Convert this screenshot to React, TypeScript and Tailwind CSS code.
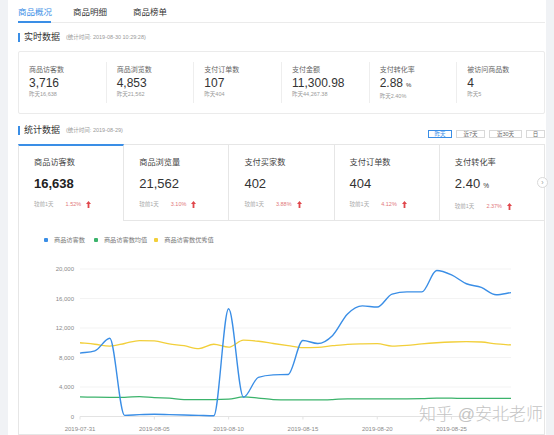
import React from "react";

const FONT = "font-['Liberation_Sans','Noto_Sans_CJK_SC',sans-serif]";

const blue = [8600, 8900, 10600, 150, 250, 300, 250, 200, 150, 100, 14600, 2600, 5300, 5650, 5700, 10300, 9900, 11000, 13900, 15000, 14850, 16600, 16900, 16900, 19800, 19200, 18000, 17500, 16500, 16800];
const green = [2650, 2620, 2600, 2600, 2700, 2550, 2500, 2300, 2300, 2300, 2350, 2650, 2500, 2300, 2250, 2250, 2250, 2300, 2400, 2400, 2400, 2400, 2400, 2420, 2500, 2480, 2450, 2450, 2450, 2450];
const yellow = [10000, 9800, 9550, 9900, 10300, 10250, 9850, 9600, 9200, 9800, 9400, 10350, 10200, 9900, 9600, 9330, 9380, 9600, 9790, 9850, 9870, 9550, 9650, 9850, 10000, 10100, 10140, 10100, 9850, 9700];

const X = (d: number) => 80 + d * (431 / 29);
const Y = (v: number) => 414.5 - (v * 147.5) / 20000;

function monotone(vals: number[]) {
  const xs = vals.map((_, i) => X(i));
  const ys = vals.map(Y);
  const n = xs.length;
  const s: number[] = [];
  for (let i = 0; i < n - 1; i++) s[i] = (ys[i + 1] - ys[i]) / (xs[i + 1] - xs[i]);
  const t: number[] = new Array(n).fill(0);
  for (let i = 1; i < n - 1; i++) {
    if (s[i - 1] * s[i] <= 0) t[i] = 0;
    else {
      const h0 = xs[i] - xs[i - 1];
      const h1 = xs[i + 1] - xs[i];
      const p = (s[i - 1] * h1 + s[i] * h0) / (h0 + h1);
      t[i] = (Math.sign(s[i - 1]) + Math.sign(s[i])) * Math.min(Math.abs(s[i - 1]), Math.abs(s[i]), 0.5 * Math.abs(p));
    }
  }
  t[0] = s[0];
  t[n - 1] = s[n - 2];
  let d = `M${xs[0].toFixed(2)},${ys[0].toFixed(2)}`;
  for (let i = 0; i < n - 1; i++) {
    const h = xs[i + 1] - xs[i];
    d += ` C${(xs[i] + h / 3).toFixed(2)},${(ys[i] + (t[i] * h) / 3).toFixed(2)} ${(xs[i + 1] - h / 3).toFixed(2)},${(ys[i + 1] - (t[i + 1] * h) / 3).toFixed(2)} ${xs[i + 1].toFixed(2)},${ys[i + 1].toFixed(2)}`;
  }
  return d;
}

const realtime = [
  { label: "商品访客数", value: "3,716", sub: "昨天16,638" },
  { label: "商品浏览数", value: "4,853", sub: "昨天21,562" },
  { label: "支付订单数", value: "107", sub: "昨天404" },
  { label: "支付金额", value: "11,300.98", sub: "昨天44,267.38" },
  { label: "支付转化率", value: "2.88", sub: "昨天2.40%", unit: "%" },
  { label: "被访问商品数", value: "4", sub: "昨天5" },
];

const metrics = [
  { label: "商品访客数", value: "16,638", pct: "1.52%" },
  { label: "商品浏览量", value: "21,562", pct: "3.10%" },
  { label: "支付买家数", value: "402", pct: "3.88%" },
  { label: "支付订单数", value: "404", pct: "4.12%" },
  { label: "支付转化率", value: "2.40", pct: "2.37%", unit: "%" },
];

function UpArrow() {
  return (
    <svg width="5" height="7" viewBox="0 0 5 7" className="ml-[5px]">
      <path d="M2.5 0 L5 3 L3.4 3 L3.4 7 L1.6 7 L1.6 3 L0 3 Z" fill="#e0474c" />
    </svg>
  );
}

function SectionTitle({ title, note }: { title: string; note: string }) {
  return (
    <div className="flex items-center h-[10px]">
      <div className="w-[2px] h-[9px] bg-[#3a8ee6]" />
      <span className="ml-[4px] text-[9px] leading-[10px] text-[#333]">{title}</span>
      <span className="ml-[6px] text-[5.5px] leading-[10px] text-[#999]">{note}</span>
    </div>
  );
}

export default function App() {
  const yTicks = [0, 4000, 8000, 12000, 16000, 20000];
  const xLabels = ["2019-07-31", "2019-08-05", "2019-08-10", "2019-08-15", "2019-08-20", "2019-08-25"];
  return (
    <div className={`w-[554px] h-[435px] overflow-hidden bg-[#f0f2f5] flex pl-[8px] ${FONT}`}>
      <div className="w-[538px] h-full bg-white pl-[10px] pr-[1px]">
        {/* top tabs */}
        <div className="flex h-[23px] border-b border-[#ebebeb] text-[8.5px] leading-[10px]">
          <div className="relative pt-[7px] text-[#3a8ee6]">
            商品概况
            <div className="absolute left-0 right-[1px] bottom-[-1px] h-[2px] bg-[#3a8ee6]" />
          </div>
          <div className="ml-[21px] pt-[7px] text-[#333]">商品明细</div>
          <div className="ml-[26px] pt-[7px] text-[#333]">商品榜单</div>
        </div>

        {/* realtime */}
        <div className="mt-[9px]">
          <SectionTitle title="实时数据" note="(统计时间: 2019-08-30 10:29:28)" />
        </div>
        <div className="mt-[9px] border border-[#ebebeb] rounded-[2px] py-[10px] flex">
          {realtime.map((r, i) => (
            <div key={i} className={`flex-1 pl-[10px] pt-[4px] pb-[3px] ${i > 0 ? "border-l border-[#eeeeee]" : ""}`}>
              <div className="text-[7px] leading-[8px] text-[#666]">{r.label}</div>
              <div className="mt-[3px] text-[12px] leading-[12px] text-[#333]">
                {r.value}
                {r.unit && <span className="ml-[3px] text-[6px]">{r.unit}</span>}
              </div>
              <div className="mt-[2px] text-[5.5px] leading-[7px] text-[#999]">{r.sub}</div>
            </div>
          ))}
        </div>

        {/* stat header */}
        <div className="mt-[11px] h-[13px] flex justify-between">
          <SectionTitle title="统计数据" note="(统计时间: 2019-08-29)" />
          <div className="flex gap-[4px] mt-[5px] text-[5.5px] leading-[5px]">
            <div className="w-[24px] h-[8px] border border-[#3a8ee6] text-[#3a8ee6] flex items-center justify-center">昨天</div>
            <div className="w-[29px] h-[8px] border border-[#d9d9d9] text-[#666] flex items-center justify-center">近7天</div>
            <div className="w-[33px] h-[8px] border border-[#d9d9d9] text-[#666] flex items-center justify-center">近30天</div>
            <div className="w-[19px] h-[8px] border border-[#d9d9d9] text-[#666] flex items-center justify-center">日</div>
          </div>
        </div>

        {/* metric tabs */}
        <div className="relative mt-[6px] flex h-[77px]">
          {metrics.map((m, i) => (
            <div
              key={i}
              className={`flex-1 pl-[15px] ${
                i === 0
                  ? "border-t-2 border-t-[#3a8ee6] border-l border-r border-[#e6e6e6] pt-[12px]"
                  : "border-t border-b border-r border-[#e6e6e6] pt-[13px]"
              }`}
            >
              <div className="text-[8.2px] leading-[10px] text-[#444]">{m.label}</div>
              <div className={`mt-[8px] text-[13px] leading-[16px] ${i === 0 ? "font-bold text-[#222]" : "text-[#333]"}`}>
                {m.value}
                {m.unit && <span className="ml-[3px] text-[6.5px] font-normal">{m.unit}</span>}
              </div>
              <div className="mt-[8px] flex items-center text-[5.5px] leading-[8px]">
                <span className="text-[#aaa]">较前1天</span>
                <span className="ml-[12px] text-[#e2787b]">{m.pct}</span>
                <UpArrow />
              </div>
            </div>
          ))}
          <div className="absolute right-[-3px] top-[33px] w-[11px] h-[11px] rounded-full border border-[#d9d9d9] bg-white flex items-center justify-center text-[7px] leading-[7px] text-[#999]">
            ›
          </div>
        </div>

        {/* chart */}
        <div className="relative h-[214px] border-l border-r border-b border-[#e6e6e6] pt-[15px]">
          <div className="flex items-center pl-[25px] h-[8px] text-[6.2px] leading-[8px] text-[#777]">
            <div className="w-[4px] h-[4px] rounded-[1px] bg-[#3a8ee6]" />
            <span className="ml-[6px]">商品访客数</span>
            <div className="ml-[9px] w-[4px] h-[4px] rounded-[1px] bg-[#3bb36b]" />
            <span className="ml-[6px]">商品访客数均值</span>
            <div className="ml-[7px] w-[4px] h-[4px] rounded-[1px] bg-[#f2cf3a]" />
            <span className="ml-[6px]">商品访客数优秀值</span>
          </div>
          <svg width="526" height="182" viewBox="19 250 526 182" className="mt-[8px] block">
            {yTicks.map((v) => (
              <g key={v}>
                <line x1="80" x2="511" y1={Y(v)} y2={Y(v)} stroke={v === 0 ? "#e3e3e3" : "#f3f3f3"} strokeWidth="1" />
                <text x="74" y={Y(v) + 2} textAnchor="end" fontSize="6" fill="#8a8a8a">
                  {v === 0 ? "0" : v.toLocaleString("en-US")}
                </text>
              </g>
            ))}
            {xLabels.map((l, i) => (
              <g key={l}>
                <line x1={X(i * 5)} x2={X(i * 5)} y1="414.5" y2="417.5" stroke="#e3e3e3" strokeWidth="1" />
                <text x={X(i * 5)} y="429" textAnchor="middle" fontSize="6" fill="#8a8a8a">
                  {l}
                </text>
              </g>
            ))}
            <path d={monotone(yellow)} fill="none" stroke="#f2cf3a" strokeWidth="1.3" />
            <path d={monotone(green)} fill="none" stroke="#3bb36b" strokeWidth="1.3" />
            <path d={monotone(blue)} fill="none" stroke="#3a8ee6" strokeWidth="1.4" />
          </svg>
          <div className="absolute left-[400px] top-[185px] text-[17px] leading-[17px] text-[#c4c4c4] font-light whitespace-nowrap">
            知乎 @安北老师
          </div>
        </div>
      </div>
    </div>
  );
}
